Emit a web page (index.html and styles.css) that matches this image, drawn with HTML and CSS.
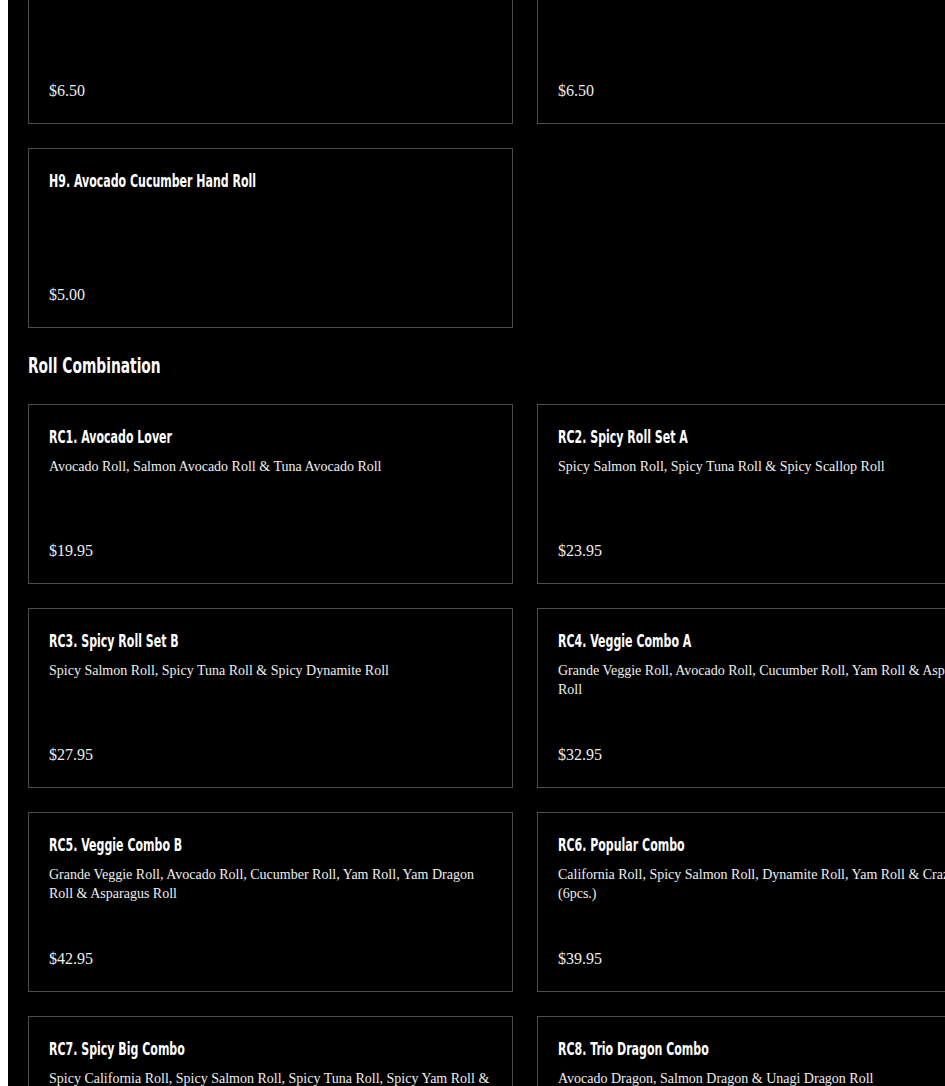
FILE: index.html
```html
<!DOCTYPE html>
<html>
<head>
<meta charset="utf-8">
<link rel="stylesheet" href="styles.css">
</head>
<body>
<main class="menu">
  <div class="grid">
    <div class="card">
      <h3 class="card-title">H7. Spicy Salmon Hand Roll</h3>
      <div class="price">$6.50</div>
    </div>
    <div class="card">
      <h3 class="card-title">H8. Spicy Tuna Hand Roll</h3>
      <div class="price">$6.50</div>
    </div>
    <div class="card">
      <h3 class="card-title">H9. Avocado Cucumber Hand Roll</h3>
      <div class="price">$5.00</div>
    </div>
  </div>

  <h2 class="section-title">Roll Combination</h2>
  <div class="grid">
    <div class="card">
      <h3 class="card-title">RC1. Avocado Lover</h3>
      <p class="desc">Avocado Roll, Salmon Avocado Roll &amp; Tuna Avocado Roll</p>
      <div class="price">$19.95</div>
    </div>
    <div class="card">
      <h3 class="card-title">RC2. Spicy Roll Set A</h3>
      <p class="desc">Spicy Salmon Roll, Spicy Tuna Roll &amp; Spicy Scallop Roll</p>
      <div class="price">$23.95</div>
    </div>
    <div class="card">
      <h3 class="card-title">RC3. Spicy Roll Set B</h3>
      <p class="desc">Spicy Salmon Roll, Spicy Tuna Roll &amp; Spicy Dynamite Roll</p>
      <div class="price">$27.95</div>
    </div>
    <div class="card">
      <h3 class="card-title">RC4. Veggie Combo A</h3>
      <p class="desc">Grande Veggie Roll, Avocado Roll, Cucumber Roll, Yam Roll &amp; Asparagus Roll</p>
      <div class="price">$32.95</div>
    </div>
    <div class="card">
      <h3 class="card-title">RC5. Veggie Combo B</h3>
      <p class="desc">Grande Veggie Roll, Avocado Roll, Cucumber Roll, Yam Roll, Yam Dragon Roll &amp; Asparagus Roll</p>
      <div class="price">$42.95</div>
    </div>
    <div class="card">
      <h3 class="card-title">RC6. Popular Combo</h3>
      <p class="desc">California Roll, Spicy Salmon Roll, Dynamite Roll, Yam Roll &amp; Crazy Roll (6pcs.)</p>
      <div class="price">$39.95</div>
    </div>
    <div class="card">
      <h3 class="card-title">RC7. Spicy Big Combo</h3>
      <p class="desc">Spicy California Roll, Spicy Salmon Roll, Spicy Tuna Roll, Spicy Yam Roll &amp; Spicy Dynamite Roll</p>
      <div class="price">$45.95</div>
    </div>
    <div class="card">
      <h3 class="card-title">RC8. Trio Dragon Combo</h3>
      <p class="desc">Avocado Dragon, Salmon Dragon &amp; Unagi Dragon Roll</p>
      <div class="price">$49.95</div>
    </div>
  </div>
</main>
</body>
</html>
```
FILE: styles.css
```css
html, body {
  overflow: hidden;
}
body {
  margin: 0 0 0 8px;
  background: #fff;
}
.menu {
  background: #000;
  width: 1034px;
  box-sizing: border-box;
  padding: 0 20px 40px;
  margin-top: -56px;
  min-height: 1200px;
  color: #fff;
}
.grid {
  display: grid;
  grid-template-columns: 485px 485px;
  gap: 24px;
}
.card {
  box-sizing: border-box;
  height: 180px;
  border: 1px solid #4d4d4d;
  padding: 20px 20px 22px;
  display: flex;
  flex-direction: column;
}
.card-title {
  margin: 0;
  font-family: "DejaVu Sans Condensed", "DejaVu Sans", sans-serif;
  font-weight: bold;
  font-size: 18px;
  line-height: 24px;
  color: #fff;
  transform: scaleX(0.68);
  transform-origin: left center;
  white-space: nowrap;
}
.desc {
  margin: 8px 0 0;
  font-family: "Liberation Serif", serif;
  font-size: 14px;
  line-height: 19px;
  color: #eee;
}
.price {
  margin-top: auto;
  font-family: "Liberation Serif", serif;
  font-size: 16px;
  line-height: 20px;
  color: #eee;
}
.section-title {
  margin: 24px 0;
  font-family: "DejaVu Sans Condensed", "DejaVu Sans", sans-serif;
  font-weight: bold;
  font-size: 21px;
  line-height: 28px;
  color: #fff;
  transform: scaleX(0.73);
  transform-origin: left center;
  white-space: nowrap;
}
```
